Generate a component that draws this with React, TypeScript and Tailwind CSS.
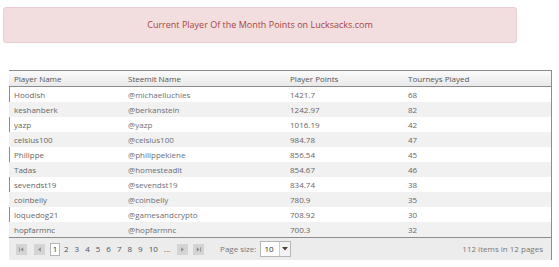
const rows = [
  { player: 'Hoodish', steemit: '@michaelluchies', points: '1421.7', played: '68' },
  { player: 'keshanberk', steemit: '@berkanstein', points: '1242.97', played: '82' },
  { player: 'yazp', steemit: '@yazp', points: '1016.19', played: '42' },
  { player: 'celsius100', steemit: '@celsius100', points: '984.78', played: '47' },
  { player: 'Philippe', steemit: '@philippekiene', points: '856.54', played: '45' },
  { player: 'Tadas', steemit: '@homesteadlt', points: '854.67', played: '46' },
  { player: 'sevendst19', steemit: '@sevendst19', points: '834.74', played: '38' },
  { player: 'coinbelly', steemit: '@coinbelly', points: '780.9', played: '35' },
  { player: 'loquedog21', steemit: '@gamesandcrypto', points: '708.92', played: '30' },
  { player: 'hopfarmnc', steemit: '@hopfarmnc', points: '700.3', played: '32' },
];

function PagerButton({ kind }: { kind: 'first' | 'prev' | 'next' | 'last' }) {
  return (
    <span className="flex h-[11px] w-[11px] items-center justify-center bg-[#d4d4d4]">
      <svg width="7" height="7" viewBox="0 0 8 8" fill="#8a8a8a">
        {kind === 'first' && (
          <>
            <rect x="1" y="1.5" width="1" height="5" />
            <path d="M6 1.5 L3 4 L6 6.5 Z" />
          </>
        )}
        {kind === 'prev' && <path d="M5.5 1.5 L2.5 4 L5.5 6.5 Z" />}
        {kind === 'next' && <path d="M2.5 1.5 L5.5 4 L2.5 6.5 Z" />}
        {kind === 'last' && (
          <>
            <path d="M2 1.5 L5 4 L2 6.5 Z" />
            <rect x="6" y="1.5" width="1" height="5" />
          </>
        )}
      </svg>
    </span>
  );
}

export default function App() {
  return (
    <div className="h-[267px] w-[559px] overflow-hidden bg-white pt-[7px] font-['Open_Sans',sans-serif] text-[8px]">
      <div className="ml-[3px] flex h-[36px] w-[514px] items-center justify-center rounded-[3px] border border-[#ebccd1] bg-[#f2dede] text-[9px] text-[#a94442]">
        Current Player Of the Month Points on Lucksacks.com
      </div>

      <div className="ml-[9px] mt-[27px] w-[543px] border-r border-t border-[#8c8c8c]">
        <div className="flex h-[16px] items-center border-b border-[#8c8c8c] bg-gradient-to-b from-[#fbfbfb] to-[#e9e9e9] text-[#555]">
          <div className="w-[119px] pl-[5px]">Player Name</div>
          <div className="w-[162px]">Steemit Name</div>
          <div className="w-[118px]">Player Points</div>
          <div className="flex-1">Tourneys Played</div>
        </div>
        {rows.map((row, i) => (
          <div
            key={row.player}
            className={`flex h-[15px] items-center border-l text-[#666] ${
              i % 2 === 0 ? 'border-[#8c8c8c] bg-white' : 'border-[#f1f1f1] bg-[#f1f1f1]'
            }`}
          >
            <div className="w-[118px] pl-[4px]">{row.player}</div>
            <div className="w-[162px] text-[#6a7078]">{row.steemit}</div>
            <div className="w-[118px] text-[#6b6460]">{row.points}</div>
            <div className="flex-1">{row.played}</div>
          </div>
        ))}
        <div className="flex h-[23px] items-center border-t border-[#8c8c8c] bg-[#ececec] pl-[7px] pr-[8px] text-[#555]">
          <PagerButton kind="first" />
          <span className="w-[7px]" />
          <PagerButton kind="prev" />
          <span className="w-[5px]" />
          <span className="flex h-[13px] w-[10px] items-center justify-center border border-[#b5b5b5] bg-white text-[#333]">
            1
          </span>
          <div className="ml-[4px] flex gap-[6px] text-[#4d5460]">
            {['2', '3', '4', '5', '6', '7', '8', '9', '10', '...'].map((p) => (
              <span key={p}>{p}</span>
            ))}
          </div>
          <span className="w-[7px]" />
          <PagerButton kind="next" />
          <span className="w-[5px]" />
          <PagerButton kind="last" />
          <span className="ml-[16px] text-[#777]">Page size:</span>
          <div className="ml-[4px] flex h-[16px] w-[31px] items-center justify-between border border-[#b5b5b5] bg-white pl-[3px] text-[#333]">
            <span>10</span>
            <span className="flex h-full w-[11px] items-center justify-center border-l border-[#ccc] bg-[#f3f3f3]">
              <svg width="6" height="4" viewBox="0 0 6 4" fill="#444">
                <path d="M0 0 L6 0 L3 3.5 Z" />
              </svg>
            </span>
          </div>
          <span className="ml-auto text-[#777]">112 items in 12 pages</span>
        </div>
      </div>
    </div>
  );
}
